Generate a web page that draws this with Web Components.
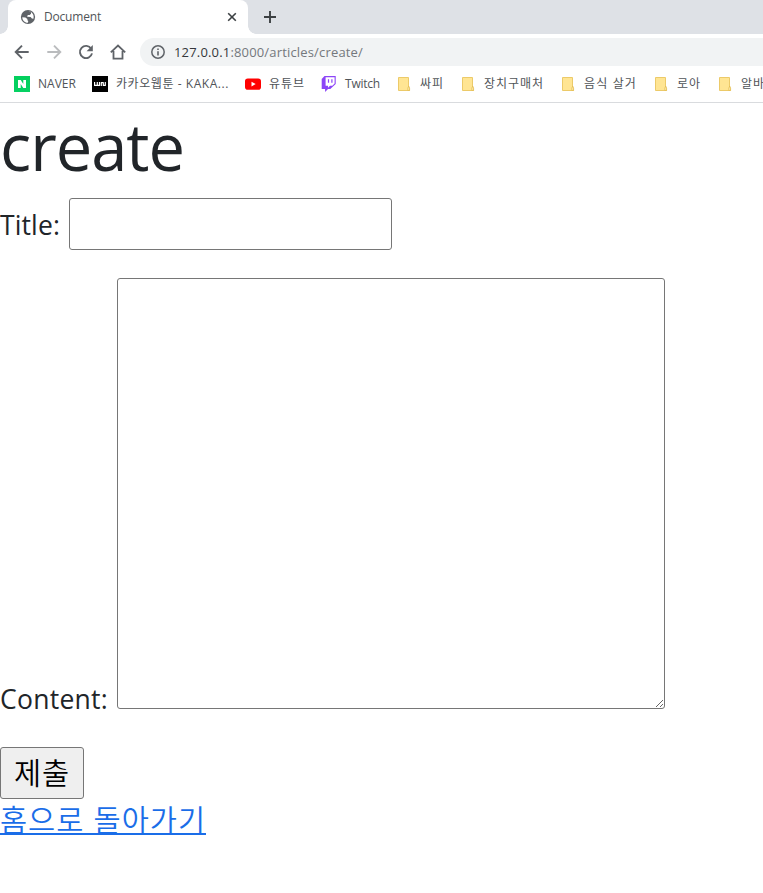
<!DOCTYPE html>
<html lang="ko"><head><meta charset="utf-8"><title>Document</title>
<style>
html,body{margin:0;height:100%;background:#fff;overflow:hidden}
body{font-family:"Open Sans","Noto Sans CJK KR",sans-serif;font-weight:400;color:#212529}
</style></head><body>
<app-window></app-window>
<script>
const define=(name,html,setup)=>customElements.define(name,class extends HTMLElement{
  connectedCallback(){
    if(this.shadowRoot)return;
    this.attachShadow({mode:'open'}).innerHTML=html;
    if(setup)setup(this,this.shadowRoot);
  }
});

// Text on one line, with its tracking adjusted to fill the width attribute.
define('fit-text','<style>:host{display:block;white-space:pre;flex:none}span{display:inline-block;text-decoration:var(--line,none);text-underline-offset:2px;text-decoration-skip-ink:none}</style><span><slot></slot></span>',(h,r)=>{
  const w=+h.getAttribute('width'),s=r.querySelector('span');
  h.style.width=w+'px';
  const n=[...h.textContent].length;
  s.style.letterSpacing=((w-s.getBoundingClientRect().width)/n)+'px';
});

const icons={
globe:'<circle cx="8" cy="8" r="7.1" fill="#5f6368"/><path d="M2.3 8.2 5.4 8.4 7.4 10v1.3l.9.8-.5 1.7C4.500 13.700 2.200 11 2.300 8.200zM8.600 2.200 11 3.300v1.400L9.700 6.100H7.800L7.100 7.800l3.500.2 1.300 1.400 1.500.3C14.600 6 12 2.600 8.600 2.200z" fill="#fff"/>',
back:'<path d="M14.700 8H2M8 1.700 1.700 8 8 14.300" fill="none" stroke="#5f6368" stroke-width="1.900"/>',
forward:'<path d="M1.300 8H14M8 1.700 14.300 8 8 14.300" fill="none" stroke="#babcbe" stroke-width="1.900"/>',
reload:'<path d="M13.200 4.700A6.100 6.100 0 1 0 14 9.400" fill="none" stroke="#5f6368" stroke-width="1.900"/><path d="M14.800 1v6.200H8.600z" fill="#5f6368"/>',
home:'<path d="M.8 8.400 8 1.600l7.200 6.800M3.500 7v7.600h9V7" fill="none" stroke="#5f6368" stroke-width="1.800"/>',
info:'<circle cx="8" cy="8" r="6.200" fill="none" stroke="#5f6368" stroke-width="1.500"/><path d="M8 7.200v4.200M8 4.600v1.500" stroke="#5f6368" stroke-width="1.600"/>',
close:'<path d="m4.200 4.200 7.600 7.600m0-7.600-7.600 7.600" stroke="#3c4043" stroke-width="1.600"/>',
plus:'<path d="M8 2v12M2 8h12" stroke="#3c4043" stroke-width="1.900"/>',
naver:'<defs><linearGradient id="g" x2="0" y2="1"><stop stop-color="#03cf5d"/><stop offset="1" stop-color="#06d163"/></linearGradient></defs><path fill="url(#g)" d="M0 0h16v16H0z"/><path d="M4 4h2.700l2.600 3.900V4H12v8H9.300L6.700 8.100V12H4z" fill="#fff"/>',
kakao:'<path d="M0 0h16v16H0z"/><path d="M2.600 6v3.400h2.700V6M5.300 9.400h2.200V6M9.300 10.100V6.700h2v3.400M11.300 9.400h2V6" fill="none" stroke="#fff" stroke-width="1.200" stroke-linejoin="round"/>',
youtube:'<rect y="2.500" width="16" height="11.200" rx="2.800" fill="#f00"/><path d="m6.500 5.800 4.200 2.300-4.200 2.300z" fill="#fff"/>',
twitch:'<path d="M3.500 0 .7 2.900v10.200h3.400V16L7 13.100h2.300L14.700 8V0z" fill="#8c45f7"/><path d="M4.600 1.200h9v6.400l-2.300 2.200H9l-2 2v-2H4.600z" fill="#fff"/><path d="M7.500 3.200v3.500M10.900 3.200v3.500" stroke="#8c45f7" stroke-width="1.200"/>',
folder:'<path d="M2.500 1.500h10v9l1 4h-11z" fill="#ffe593" stroke="#ecca69"/><path d="M12.700 10q-1.200 2-.8 4.500h1.700q.4-2.500-.9-4.500z" fill="#fff0b6" stroke="#e3bd52" stroke-width=".8"/>'
};
define('ui-icon','<style>:host{display:block;flex:none;width:16px;height:16px}svg{display:block;width:100%;height:100%}</style><svg viewBox="0 0 16 16"></svg>',(h,r)=>{
  r.querySelector('svg').innerHTML=icons[h.getAttribute('name')];
});

define('tab-strip',`<style>
:host{display:flex;height:34px;background:#dee1e6;padding-left:8px;box-sizing:border-box}
.tab{position:relative;display:flex;align-items:center;width:240px;box-sizing:border-box;padding:0 8px 0 12px;background:#fff;border-radius:8px 8px 0 0;font-size:12px;color:#505458}
.tab::before,.tab::after{content:"";position:absolute;bottom:0;width:8px;height:8px}
.tab::before{left:-8px;background:radial-gradient(circle at 0 0,transparent 7.5px,#fff 8px)}
.tab::after{right:-8px;background:radial-gradient(circle at 100% 0,transparent 7.5px,#fff 8px)}
fit-text{margin:-2px 0 0 8px}.x{margin-left:auto}.plus{margin:9px 0 0 14px}
</style><div class="tab"><ui-icon name="globe"></ui-icon><fit-text width="57">Document</fit-text><ui-icon class="x" name="close"></ui-icon></div><ui-icon class="plus" name="plus"></ui-icon>`);

define('address-bar',`<style>
:host{display:flex;align-items:center;height:36px;padding-left:14px;gap:16px}
.url{display:flex;align-items:center;flex:1;height:28px;margin-left:-2px;padding-left:10px;background:#f1f3f4;border-radius:14px 0 0 14px;font-size:13px;color:#74787d}
fit-text{margin-left:8px}b{font-weight:inherit;color:#34373b}
</style><ui-icon name="back"></ui-icon><ui-icon name="forward"></ui-icon><ui-icon name="reload"></ui-icon><ui-icon name="home"></ui-icon>
<div class="url"><ui-icon name="info"></ui-icon><fit-text width="189"><b>127.0.0.1</b>:8000/articles/create/</fit-text></div>`);

define('bookmark-item',`<style>:host{display:flex;align-items:center;gap:8px;flex:none;font-size:12px;line-height:18px;color:#505458}</style><ui-icon></ui-icon><fit-text></fit-text>`,(h,r)=>{
  const i=document.createElement('ui-icon');i.setAttribute('name',h.getAttribute('icon')||'folder');
  const t=document.createElement('fit-text');t.setAttribute('width',h.getAttribute('width'));t.textContent=h.getAttribute('label');
  r.querySelector('ui-icon').replaceWith(i);r.querySelector('fit-text').replaceWith(t);
});

define('bookmark-bar',`<style>:host{display:flex;height:33px;box-sizing:border-box;border-bottom:1px solid #d9dbde;padding:0 0 4px 14px;gap:16px;align-items:center;overflow:hidden}</style>
<bookmark-item icon="naver" label="NAVER" width="38"></bookmark-item>
<bookmark-item icon="kakao" label="카카오웹툰 - KAKA..." width="113"></bookmark-item>
<bookmark-item icon="youtube" label="유튜브" width="36"></bookmark-item>
<bookmark-item icon="twitch" label="Twitch" width="35"></bookmark-item>
<bookmark-item label="싸피" width="24"></bookmark-item>
<bookmark-item label="장치구매처" width="60"></bookmark-item>
<bookmark-item label="음식 살거" width="53"></bookmark-item>
<bookmark-item label="로아" width="24"></bookmark-item>
<bookmark-item label="알바" width="24"></bookmark-item>`);

define('article-form',`<style>
:host{display:block;font-size:26.500px;line-height:42px}
h1{margin:0;font-size:65px;line-height:84px;font-weight:inherit;padding-top:1px;height:94px}
.row{display:flex}
input,textarea{display:block;box-sizing:border-box;border:1px solid #767676;border-radius:3px;background:#fff;margin:0;padding:2px;outline:0}
input{width:323px;height:52px;margin-left:9px}
textarea{width:548px;height:431px;margin-left:9px;resize:both}
.title{align-items:center;height:52px}.title fit-text{padding-top:2px}
.content{align-items:flex-end;margin-top:28px}.content fit-text{margin-bottom:-11px}
button{display:flex;align-items:center;justify-content:center;width:84px;height:52px;margin:38px 0 0;padding:0 0 5px;border:1px solid #767676;border-radius:3px;background:#efefef;color:#000;font:350 29.500px "Noto Sans CJK KR",sans-serif}
a{display:block;width:206px;margin-top:-2px;color:#1a6de8;font:350 29.500px/42px "Noto Sans CJK KR",sans-serif;text-decoration:none;--line:underline 2px}
</style>
<h1><fit-text width="184">create</fit-text></h1>
<div class="row title"><fit-text width="60">Title:</fit-text><input aria-label="Title"></div>
<div class="row content"><fit-text width="108">Content:</fit-text><textarea aria-label="Content"></textarea></div>
<button><fit-text width="56">제출</fit-text></button>
<a href="#"><fit-text width="206">홈으로 돌아가기</fit-text></a>`);

define('app-window','<style>:host{display:flex;flex-direction:column}</style><tab-strip></tab-strip><address-bar></address-bar><bookmark-bar></bookmark-bar><article-form></article-form>');
</script></body></html>
